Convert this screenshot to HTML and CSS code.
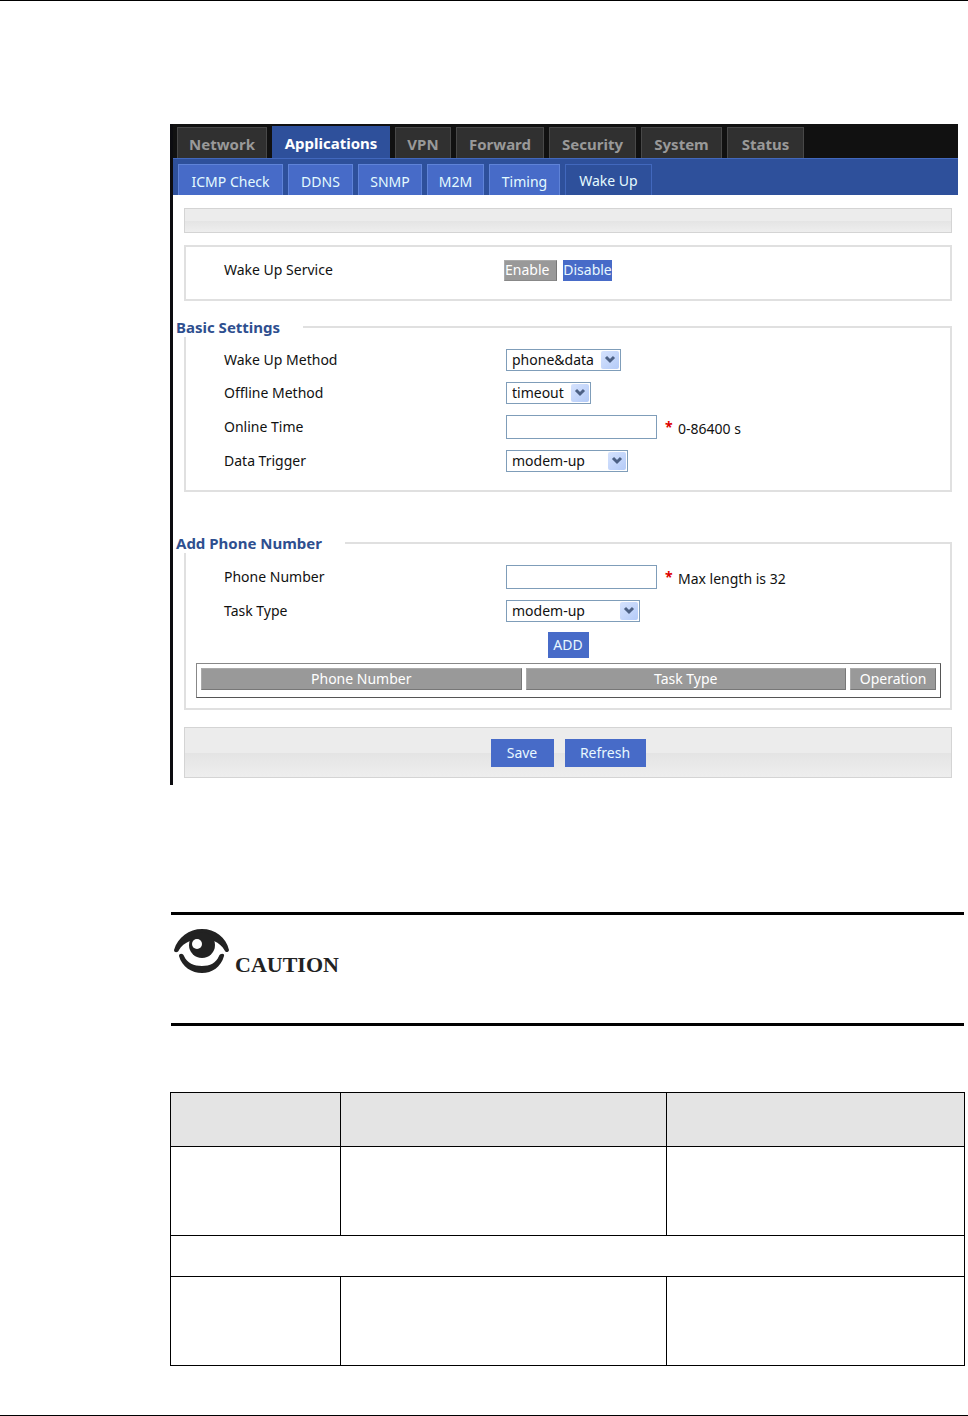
FILE: index.html
```
<!DOCTYPE html>
<html lang="en">
<head>
    <meta charset="utf-8">
    <title>Wake Up</title>
    <link rel="stylesheet" href="styles.css">
</head>
<body>
    <div class="page">
        <!-- Router web UI -->
        <div class="panel">
            <nav class="tabs">
                <a href="#">Network</a>
                <a href="#" class="active">Applications</a>
                <a href="#">VPN</a>
                <a href="#">Forward</a>
                <a href="#">Security</a>
                <a href="#">System</a>
                <a href="#">Status</a>
            </nav>
            <nav class="subtabs">
                <a href="#">ICMP Check</a>
                <a href="#">DDNS</a>
                <a href="#">SNMP</a>
                <a href="#">M2M</a>
                <a href="#">Timing</a>
                <a href="#" class="active">Wake Up</a>
            </nav>

            <form class="content">
                <div class="bar"></div>

                <div class="box">
                    <div class="row">
                        <span class="name">Wake Up Service</span>
                        <div class="switch">
                            <button type="button" class="off">Enable</button>
                            <button type="button" class="on">Disable</button>
                        </div>
                    </div>
                </div>

                <fieldset class="basic">
                    <legend>Basic Settings</legend>
                    <div class="row">
                        <label class="name" for="wake">Wake Up Method</label>
                        <span class="select w-phone">
                            <select id="wake"><option>phone&amp;data</option></select>
                            <svg viewBox="0 0 18 18"><path d="M5 6l4 4 4-4"/></svg>
                        </span>
                    </div>
                    <div class="row">
                        <label class="name" for="offline">Offline Method</label>
                        <span class="select w-timeout">
                            <select id="offline"><option>timeout</option></select>
                            <svg viewBox="0 0 18 18"><path d="M5 6l4 4 4-4"/></svg>
                        </span>
                    </div>
                    <div class="row tall">
                        <label class="name" for="online">Online Time</label>
                        <input type="text" id="online">
                        <span class="star">*</span>
                        <span class="hint">0-86400 s</span>
                    </div>
                    <div class="row">
                        <label class="name" for="trigger">Data Trigger</label>
                        <span class="select w-trigger">
                            <select id="trigger"><option>modem-up</option></select>
                            <svg viewBox="0 0 18 18"><path d="M5 6l4 4 4-4"/></svg>
                        </span>
                    </div>
                </fieldset>

                <fieldset class="phones">
                    <legend>Add Phone Number</legend>
                    <div class="row tall">
                        <label class="name" for="phone">Phone Number</label>
                        <input type="text" id="phone">
                        <span class="star">*</span>
                        <span class="hint">Max length is 32</span>
                    </div>
                    <div class="row">
                        <label class="name" for="task">Task Type</label>
                        <span class="select w-task">
                            <select id="task"><option>modem-up</option></select>
                            <svg viewBox="0 0 18 18"><path d="M5 6l4 4 4-4"/></svg>
                        </span>
                    </div>
                    <div class="center">
                        <button type="button" class="add">ADD</button>
                    </div>
                    <table class="list">
                        <tr>
                            <th>Phone Number</th>
                            <th>Task Type</th>
                            <th class="op">Operation</th>
                        </tr>
                    </table>
                </fieldset>

                <div class="bar actions">
                    <button type="button" class="save">Save</button>
                    <button type="button" class="refresh">Refresh</button>
                </div>
            </form>
        </div>

        <!-- Caution note -->
        <div class="caution">
            <svg class="eye" viewBox="0 0 56 46">
                <path d="M0 21C4 8 15 0 28 0s24 8 27 21c0 2-3 3-4 1-3-5-6-8-11-10H16C11 14 7 17 5 21c-1 3-5 3-5 0z"/>
                <circle cx="28" cy="16" r="13"/>
                <circle class="shine" cx="23" cy="15" r="5"/>
                <path d="M5 27c0-3 4-3 5 0 3 7 10 10 18 10s14-3 17-10c1-3 6-3 5 0-3 11-12 17-22 17S8 38 5 27z"/>
            </svg>
            <span>CAUTION</span>
        </div>

        <!-- Parameter table -->
        <table class="params">
            <tr class="head"><th class="c1"></th><th class="c2"></th><th></th></tr>
            <tr class="high"><td></td><td></td><td></td></tr>
            <tr class="section"><td colspan="3"></td></tr>
            <tr class="high"><td></td><td></td><td></td></tr>
        </table>
    </div>
</body>
</html>
```
FILE: styles.css
```
* {
    box-sizing: border-box;
}

body {
    margin: 0;
    background: #fff;
    color: #111;
    font-family: "Noto Sans", "Open Sans", sans-serif;
    font-size: 14px;
    line-height: 20px;
}

.page {
    min-height: 100vh;
    padding: 123px 3px 0 170px;
    border-top: 1px solid #000;
    border-bottom: 1px solid #000;
}

.panel {
    margin-right: 7px;
    border-left: 3px solid #0c0c10;
}

/* main menu */
.tabs {
    display: grid;
    grid-template-columns: 90px 118px 56px 88px 87px 81px 77px;
    column-gap: 5px;
    align-items: end;
    height: 34px;
    padding-left: 4px;
    background: #111;
}

.tabs a {
    height: 31px;
    border: 1px solid #484848;
    border-bottom: none;
    background: #303030;
    color: #999;
    font-size: 15px;
    font-weight: bold;
    line-height: 32px;
    text-align: center;
    text-decoration: none;
}

.tabs a.active {
    height: 32px;
    border-color: #2e509b;
    background: #2e509b;
    color: #fff;
}

.subtabs {
    display: grid;
    grid-template-columns: 105px 65px 64px 57px 71px 87px;
    column-gap: 5px;
    padding: 5px 0 0 5px;
    border-top: 1px solid #4268bd;
    background: #2e509b;
}

.subtabs a {
    height: 31px;
    border: 1px solid #5f83d8;
    border-bottom: none;
    background: #476bc8;
    color: #e4fbff;
    line-height: 33px;
    text-align: center;
    text-decoration: none;
}

.subtabs a.active {
    border-color: #4268bd;
    background: #2e509b;
    line-height: 31px;
}

.content {
    padding: 13px 6px 7px 11px;
}

.bar {
    height: 25px;
    border: 1px solid #d4d4d4;
    background: linear-gradient(#ececec 50%, #e4e4e4 51%, #eee);
}

.box {
    height: 56px;
    margin-top: 12px;
    padding: 12px 0 0 38px;
    border: 2px solid #e0e0e0;
}

.row {
    display: flex;
    align-items: center;
    height: 22px;
    margin-bottom: 11px;
}

.row.tall {
    height: 24px;
}

.name {
    width: 282px;
}

.switch {
    display: flex;
    gap: 6px;
    margin-left: -2px;
}

button {
    padding: 0;
    border: 1px solid #476bc8;
    background: #476bc8;
    color: #e8f8ff;
    font: inherit;
    cursor: pointer;
}

.switch button {
    height: 21px;
    line-height: 18px;
    text-align: left;
}

.switch .off {
    width: 53px;
    border-color: #aaa #777 #888 #aaa;
    background: #999;
    color: #fff;
}

.switch .on {
    width: 49px;
    border-width: 1px 0;
    text-align: center;
}

/* groups */
fieldset {
    min-width: 0;
    margin: 0;
    padding: 0 10px 0 38px;
    border: 2px solid #e0e0e0;
}

legend {
    margin-left: -49px;
    padding: 0 23px 0 1px;
    background: #fff;
    color: #2e4f8f;
    font-size: 15px;
    font-weight: bold;
}

.basic {
    height: 175px;
    margin-top: 16px;
    padding-top: 12px;
}

.phones {
    height: 177px;
    margin-top: 41px;
    padding-top: 12px;
}

.select {
    position: relative;
    height: 22px;
}

select {
    appearance: none;
    width: 100%;
    height: 22px;
    padding: 0 0 0 5px;
    border: 1px solid #7f9db9;
    border-radius: 0;
    background: #fff;
    color: #111;
    font: inherit;
    line-height: 20px;
}

.select svg {
    position: absolute;
    top: 2px;
    right: 2px;
    width: 18px;
    height: 18px;
    background: linear-gradient(135deg, #d5e2fd, #b4cbf8);
    border-radius: 2px;
    pointer-events: none;
}

.select path {
    fill: none;
    stroke: #4d6185;
    stroke-width: 3;
}

.w-phone {
    width: 115px;
}

.w-timeout {
    width: 85px;
}

.w-trigger {
    width: 122px;
}

.w-task {
    width: 134px;
}

input {
    width: 151px;
    height: 24px;
    padding: 0 5px;
    border: 1px solid #7f9db9;
    background: #fff;
    font: inherit;
}

.star {
    width: 13px;
    margin-left: 8px;
    color: #d00;
    font-weight: bold;
}

.hint {
    padding-top: 3px;
}

.center {
    margin: -1px 0 5px -28px;
    text-align: center;
}

.add {
    display: block;
    width: 41px;
    height: 26px;
    margin: 0 auto;
}

.list {
    width: calc(100% + 29px);
    height: 35px;
    margin-left: -28px;
    padding: 0 0 3px;
    border: 1px solid;
    border-color: #888 #555 #555 #888;
    border-spacing: 4px;
    table-layout: fixed;
}

.list th {
    height: 22px;
    padding: 0;
    border: 1px solid;
    border-color: #aaa #777 #777 #aaa;
    background: #999;
    color: #fff;
    font-weight: normal;
    line-height: 18px;
}

.list .op {
    width: 86px;
}

.actions {
    display: flex;
    justify-content: center;
    align-items: center;
    gap: 11px;
    height: 51px;
    margin-top: 17px;
}

.actions button {
    height: 28px;
}

.save {
    width: 63px;
}

.refresh {
    width: 81px;
}

/* caution note */
.caution {
    display: flex;
    align-items: flex-start;
    gap: 5px;
    height: 114px;
    margin: 127px 1px 0;
    padding: 14px 0 0 3px;
    border-top: 3px solid #000;
    border-bottom: 3px solid #000;
    color: #222;
    font-family: "Liberation Serif", serif;
    font-size: 22px;
    font-weight: bold;
    line-height: 24px;
}

.caution span {
    margin-top: 24px;
}

.eye {
    width: 56px;
    height: 46px;
    fill: #222;
}

.eye .shine {
    fill: #fff;
}

/* parameter table */
.params {
    width: 100%;
    margin-top: 66px;
    border-collapse: collapse;
    table-layout: fixed;
}

.params th,
.params td {
    padding: 0;
    border: 1px solid #000;
}

.params .c1 {
    width: 170px;
}

.params .c2 {
    width: 326px;
}

.head {
    height: 54px;
    background: #e4e4e4;
}

.high {
    height: 89px;
}

.section {
    height: 41px;
}
```
